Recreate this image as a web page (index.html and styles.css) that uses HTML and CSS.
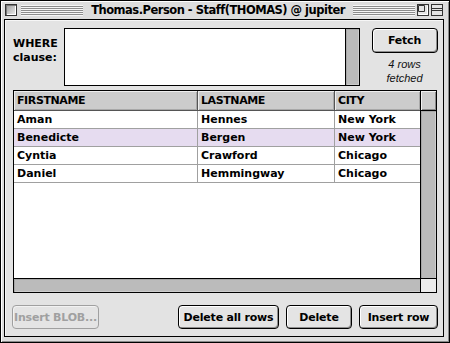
FILE: index.html
```html
<!DOCTYPE html>
<html lang="en">
<head>
  <meta charset="UTF-8">
  <title>Thomas.Person - Staff(THOMAS) @ jupiter</title>
  <link rel="stylesheet" href="styles.css">
</head>
<body>
  <div class="window">
    <div class="titlebar">
      <span class="closebox"></span>
      <span class="stripes"></span>
      <span class="title">Thomas.Person - Staff(THOMAS) @ jupiter</span>
      <span class="stripes"></span>
      <svg class="winbox" width="12" height="12" viewBox="0 0 12 12">
        <rect x="0.5" y="0.5" width="11" height="11" fill="#e4e4e4" stroke="#333"/>
        <path d="M1.5 1.5 H7.5 V7.5 H1.5 Z" fill="none" stroke="#333"/>
        <path d="M2 10.5 H10.5 V2" fill="none" stroke="#fff"/>
      </svg>
      <svg class="winbox" width="12" height="12" viewBox="0 0 12 12">
        <rect x="0.5" y="0.5" width="11" height="11" fill="#e4e4e4" stroke="#333"/>
        <path d="M1 4.5 H11 M1 6.5 H11" stroke="#333"/>
      </svg>
    </div>

    <div class="content">
      <div class="query">
        <label class="where-label" for="where">WHERE<br>clause:</label>
        <div class="where-box">
          <div class="where-input" id="where"></div>
          <div class="where-scroll"></div>
        </div>
        <div class="fetch-col">
          <button class="btn fetch">Fetch</button>
          <p class="status">4 rows<br>fetched</p>
        </div>
      </div>

      <div class="grid">
        <div class="grid-main">
          <div class="grid-body">
            <table class="rows">
              <colgroup>
                <col class="c1"><col class="c2"><col class="c3">
              </colgroup>
              <thead>
                <tr><th>FIRSTNAME</th><th>LASTNAME</th><th class="last">CITY</th></tr>
              </thead>
              <tbody>
                <tr><td>Aman</td><td>Hennes</td><td class="last">New York</td></tr>
                <tr class="selected"><td>Benedicte</td><td>Bergen</td><td class="last">New York</td></tr>
                <tr><td>Cyntia</td><td>Crawford</td><td class="last">Chicago</td></tr>
                <tr><td>Daniel</td><td>Hemmingway</td><td class="last">Chicago</td></tr>
              </tbody>
            </table>
          </div>
          <div class="vscroll">
            <div class="vscroll-head"></div>
            <div class="vscroll-track"></div>
          </div>
        </div>
        <div class="hscroll-row">
          <div class="hscroll"></div>
          <div class="corner"></div>
        </div>
      </div>

      <div class="actions">
        <button class="btn blob" disabled>Insert BLOB...</button>
        <button class="btn del-all">Delete all rows</button>
        <button class="btn del">Delete</button>
        <button class="btn ins">Insert row</button>
      </div>
    </div>
  </div>
</body>
</html>
```

FILE: styles.css
```css
body {
  margin: 0;
  background: #ffffff;
  font-family: "DejaVu Sans", Verdana, sans-serif;
  font-size: 11px;
  font-weight: bold;
  color: #000;
}

.window {
  width: 450px;
  height: 343px;
  box-sizing: border-box;
  border: 1px solid #000;
  padding: 0 5px 5px 3px;
  background: #dddddd;
  display: flex;
  flex-direction: column;
  box-shadow: inset 1px 1px #ffffff, inset -1px -1px #8a8a8a;
}

/* title bar */
.titlebar {
  height: 18px;
  margin: 0 -5px 0 -3px;
  padding: 0 6px 0 4px;
  display: flex;
  align-items: center;
  gap: 4px;
}

.closebox {
  width: 10px;
  height: 10px;
  border: 1px solid #333;
  background: linear-gradient(135deg, #9a9a9a, #f0f0f0);
  box-shadow: inset 1px 1px #777, inset -1px -1px #fff;
}

.stripes {
  flex: 1;
  height: 11px;
  background: repeating-linear-gradient(to bottom, #f6f6f6 0 1px, #8c8c8c 1px 2px);
}

.title {
  padding: 0 4px;
  font-size: 11.5px;
  letter-spacing: -0.5px;
  white-space: nowrap;
}

.winbox {
  display: block;
  margin-left: -2px;
}

.winbox + .winbox {
  margin-left: -2px;
}

/* content area */
.content {
  flex: 1;
  border: 1px solid #000;
  background: #e3e3e3;
  padding: 8px 5px 7px 8px;
  display: flex;
  flex-direction: column;
  box-shadow: inset 1px 1px #f6f6f6;
}

.query {
  display: flex;
  height: 58px;
}

.where-label {
  width: 51px;
  padding-top: 9px;
  line-height: 14px;
}

.where-box {
  width: 296px;
  box-sizing: border-box;
  border: 1px solid #000;
  background: #fff;
  display: flex;
}

.where-input {
  flex: 1;
}

.where-scroll {
  width: 13px;
  border-left: 1px solid #000;
  background: #bbbbbb;
  box-shadow: inset 1px 1px #a8a8a8, inset -1px -1px #cccccc;
}

.fetch-col {
  margin-left: 11px;
  width: 67px;
  text-align: center;
}

.status {
  margin: 4px 0 0;
  font-family: "Liberation Sans", Arial, sans-serif;
  font-size: 11px;
  font-weight: normal;
  font-style: italic;
  line-height: 14px;
  color: #111;
}

/* buttons */
.btn {
  height: 24px;
  box-sizing: border-box;
  border: 1px solid #000;
  border-radius: 4px;
  background: #e4e4e4;
  box-shadow: inset 1px 1px #ffffff, inset -1px -1px #8e8e8e;
  font-family: "DejaVu Sans", Verdana, sans-serif;
  font-size: 11px;
  font-weight: bold;
  color: #000;
  padding: 0;
  letter-spacing: -0.2px;
}

.fetch {
  width: 66px;
  height: 25px;
}

.btn:disabled {
  border-color: #a0a0a0;
  color: #a0a0a0;
  box-shadow: inset 1px 1px #f2f2f2;
}

/* grid */
.grid {
  margin-top: 4px;
  margin-right: 1px;
  height: 203px;
  box-sizing: border-box;
  border: 1px solid #000;
  background: #fff;
  display: flex;
  flex-direction: column;
}

.grid-main {
  flex: 1;
  display: flex;
  min-height: 0;
}

.grid-body {
  flex: 1;
}

.rows {
  width: 100%;
  table-layout: fixed;
  border-collapse: separate;
  border-spacing: 0;
}

.c1 { width: 184px; }
.c2 { width: 137px; }
.c3 { width: 85px; }

.rows th {
  height: 19px;
  padding: 0 3px;
  line-height: 19px;
  text-align: left;
  background: #cccccc;
  border-right: 1px solid #555;
  border-bottom: 1px solid #555;
  box-shadow: inset 1px 1px #eeeeee, inset -1px -1px #a8a8a8;
  letter-spacing: -0.4px;
  overflow: hidden;
  white-space: nowrap;
}

.rows td {
  height: 17px;
  padding: 0 3px;
  line-height: 17px;
  border-right: 1px solid #a0a0a0;
  border-bottom: 1px solid #a0a0a0;
  overflow: hidden;
  white-space: nowrap;
}

.rows .last {
  border-right: none;
}

.rows tr.selected td {
  background: #e6dcf0;
}

.vscroll {
  width: 15px;
  border-left: 1px solid #000;
  display: flex;
  flex-direction: column;
}

.vscroll-head {
  height: 19px;
  background: #cccccc;
  border-bottom: 1px solid #000;
  box-shadow: inset 1px 1px #f0f0f0, inset -1px -1px #8a8a8a;
}

.vscroll-track {
  flex: 1;
  background: #bbbbbb;
  box-shadow: inset 1px 1px #a6a6a6, inset -1px 0 #cdcdcd;
}

.hscroll-row {
  height: 13px;
  border-top: 1px solid #000;
  display: flex;
}

.hscroll {
  flex: 1;
  background: #bbbbbb;
  box-shadow: inset 1px 1px #a6a6a6, inset 0 -1px #cdcdcd;
}

.corner {
  width: 15px;
  border-left: 1px solid #000;
  background: #ececec;
}

/* bottom row */
.actions {
  margin-top: 12px;
  display: flex;
  gap: 7px;
}

.blob {
  width: 87px;
  margin-left: -1px;
  margin-right: auto;
}

.del-all { width: 101px; }
.del { width: 66px; }
.ins { width: 79px; }
```
